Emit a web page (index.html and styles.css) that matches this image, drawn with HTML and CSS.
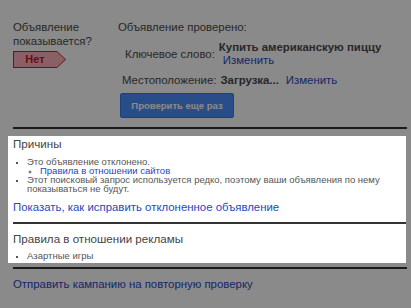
FILE: index.html
```html
<!DOCTYPE html>
<html>
<head>
    <title>Статус объявления</title>
    <link rel="stylesheet" href="styles.css">
</head>
<body>
    <div class="overlay"></div>

    <div class="top">
        <div class="status">
            <div class="status-label">Объявление<br>показывается?</div>
            <div class="badge"><span>Нет</span></div>
        </div>
        <div class="check">
            <div class="check-title">Объявление проверено:</div>
            <div class="check-row keyword-row">
                <span class="row-label">Ключевое слово:</span>
                <span class="keyword">
                    <b>Купить американскую пиццу</b>
                    <a href="#" class="edit-link">Изменить</a>
                </span>
            </div>
            <div class="check-row location-row">
                <span class="row-label">Местоположение:</span>
                <b>Загрузка...</b>
                <a href="#" class="edit-link">Изменить</a>
            </div>
            <button class="recheck">Проверить еще раз</button>
        </div>
    </div>

    <div class="rule"></div>

    <div class="panel">
        <h3>Причины</h3>
        <ul class="reasons">
            <li>Это объявление отклонено.
                <ul>
                    <li><a href="#">Правила в отношении сайтов</a></li>
                </ul>
            </li>
            <li>Этот поисковый запрос используется редко, поэтому ваши объявления по нему показываться не будут.</li>
        </ul>
        <a href="#" class="fix-link">Показать, как исправить отклоненное объявление</a>
        <div class="rule inner"></div>
        <h3 class="policy-title">Правила в отношении рекламы</h3>
        <ul class="reasons policy">
            <li>Азартные игры</li>
        </ul>
    </div>

    <div class="rule bottom"></div>

    <a href="#" class="resubmit">Отправить кампанию на повторную проверку</a>
</body>
</html>
```

FILE: styles.css
```css
body {
    font-family: "Liberation Sans", Arial, sans-serif;
    font-size: 11.4px;
    color: #4a4a4a;
    background-color: #fff;
    margin: 0;
    padding: 0;
    position: relative;
    height: 308px;
    overflow: hidden;
}

a {
    color: #2548c0;
    text-decoration: none;
}

/* dimming layer over everything except the panel */
.overlay {
    position: absolute;
    left: 0;
    top: 0;
    right: 0;
    bottom: 0;
    background-color: rgba(0, 0, 0, 0.46);
    z-index: 1;
}

.top {
    display: flex;
    padding: 20px 0 0 13px;
}

.status {
    width: 105px;
}

.status-label {
    line-height: 14px;
}

/* arrow-shaped label: red outline, pink fill */
.badge {
    width: 53px;
    height: 17px;
    margin-top: 3px;
    padding: 1px;
    box-sizing: border-box;
    background-color: #c62a2a;
    clip-path: polygon(0 0, 44px 0, 53px 50%, 44px 100%, 0 100%);
}

.badge span {
    display: block;
    height: 15px;
    padding-right: 9px;
    background-color: #ffb2be;
    clip-path: polygon(0 0, 43px 0, 51px 50%, 43px 100%, 0 100%);
    color: #c8101c;
    font-weight: bold;
    font-size: 11px;
    line-height: 15px;
    text-align: center;
}

.check-title {
    line-height: 14px;
}

.check-row {
    display: flex;
    align-items: baseline;
    gap: 4px;
    margin-left: 4px;
}

.keyword-row {
    margin-left: 7px;
    margin-top: 7px;
    align-items: center;
}

.keyword {
    display: flex;
    flex-direction: column;
    line-height: 13px;
    margin-left: 0;
}

.keyword .edit-link {
    margin-left: 4px;
}

.location-row {
    margin-top: 6px;
    line-height: 14px;
}

.location-row .edit-link {
    margin-left: 3px;
}

.recheck {
    margin: 6px 0 0 2px;
    width: 114px;
    height: 25px;
    background-color: #4d8ffb;
    color: #fff;
    border: 1px solid #3a78e0;
    border-radius: 2px;
    font-family: "Liberation Sans", Arial, sans-serif;
    font-size: 9.5px;
    font-weight: bold;
    padding: 0;
}

.rule {
    height: 2px;
    background-color: #333;
    margin: 9px 4px 0 13px;
}

.panel {
    position: relative;
    z-index: 2;
    background-color: #fff;
    margin: 7px 5px 0 8px;
    padding: 1px 0 3px 5px;
}

.panel h3 {
    font-size: 11.6px;
    font-weight: normal;
    color: #444;
    margin: 0;
    line-height: 14px;
}

.reasons {
    list-style-type: square;
    font-size: 9.5px;
    line-height: 9px;
    color: #555;
    margin: 6px 0 0;
    padding: 0 0 0 14px;
}

.reasons ul {
    list-style-type: circle;
    padding-left: 13px;
    margin: 0;
}

.reasons li::marker {
    font-size: 8px;
}

.fix-link {
    display: block;
    font-size: 11.4px;
    line-height: 15px;
    margin-top: 7px;
}

.rule.inner {
    margin: 7px 0 0 0;
}

.panel .policy-title {
    margin-top: 8px;
}

.reasons.policy {
    margin-top: 5px;
}

.rule.bottom {
    margin-top: 4px;
}

.resubmit {
    display: block;
    margin: 8px 0 0 13px;
    font-size: 11.4px;
    line-height: 15px;
}
```
